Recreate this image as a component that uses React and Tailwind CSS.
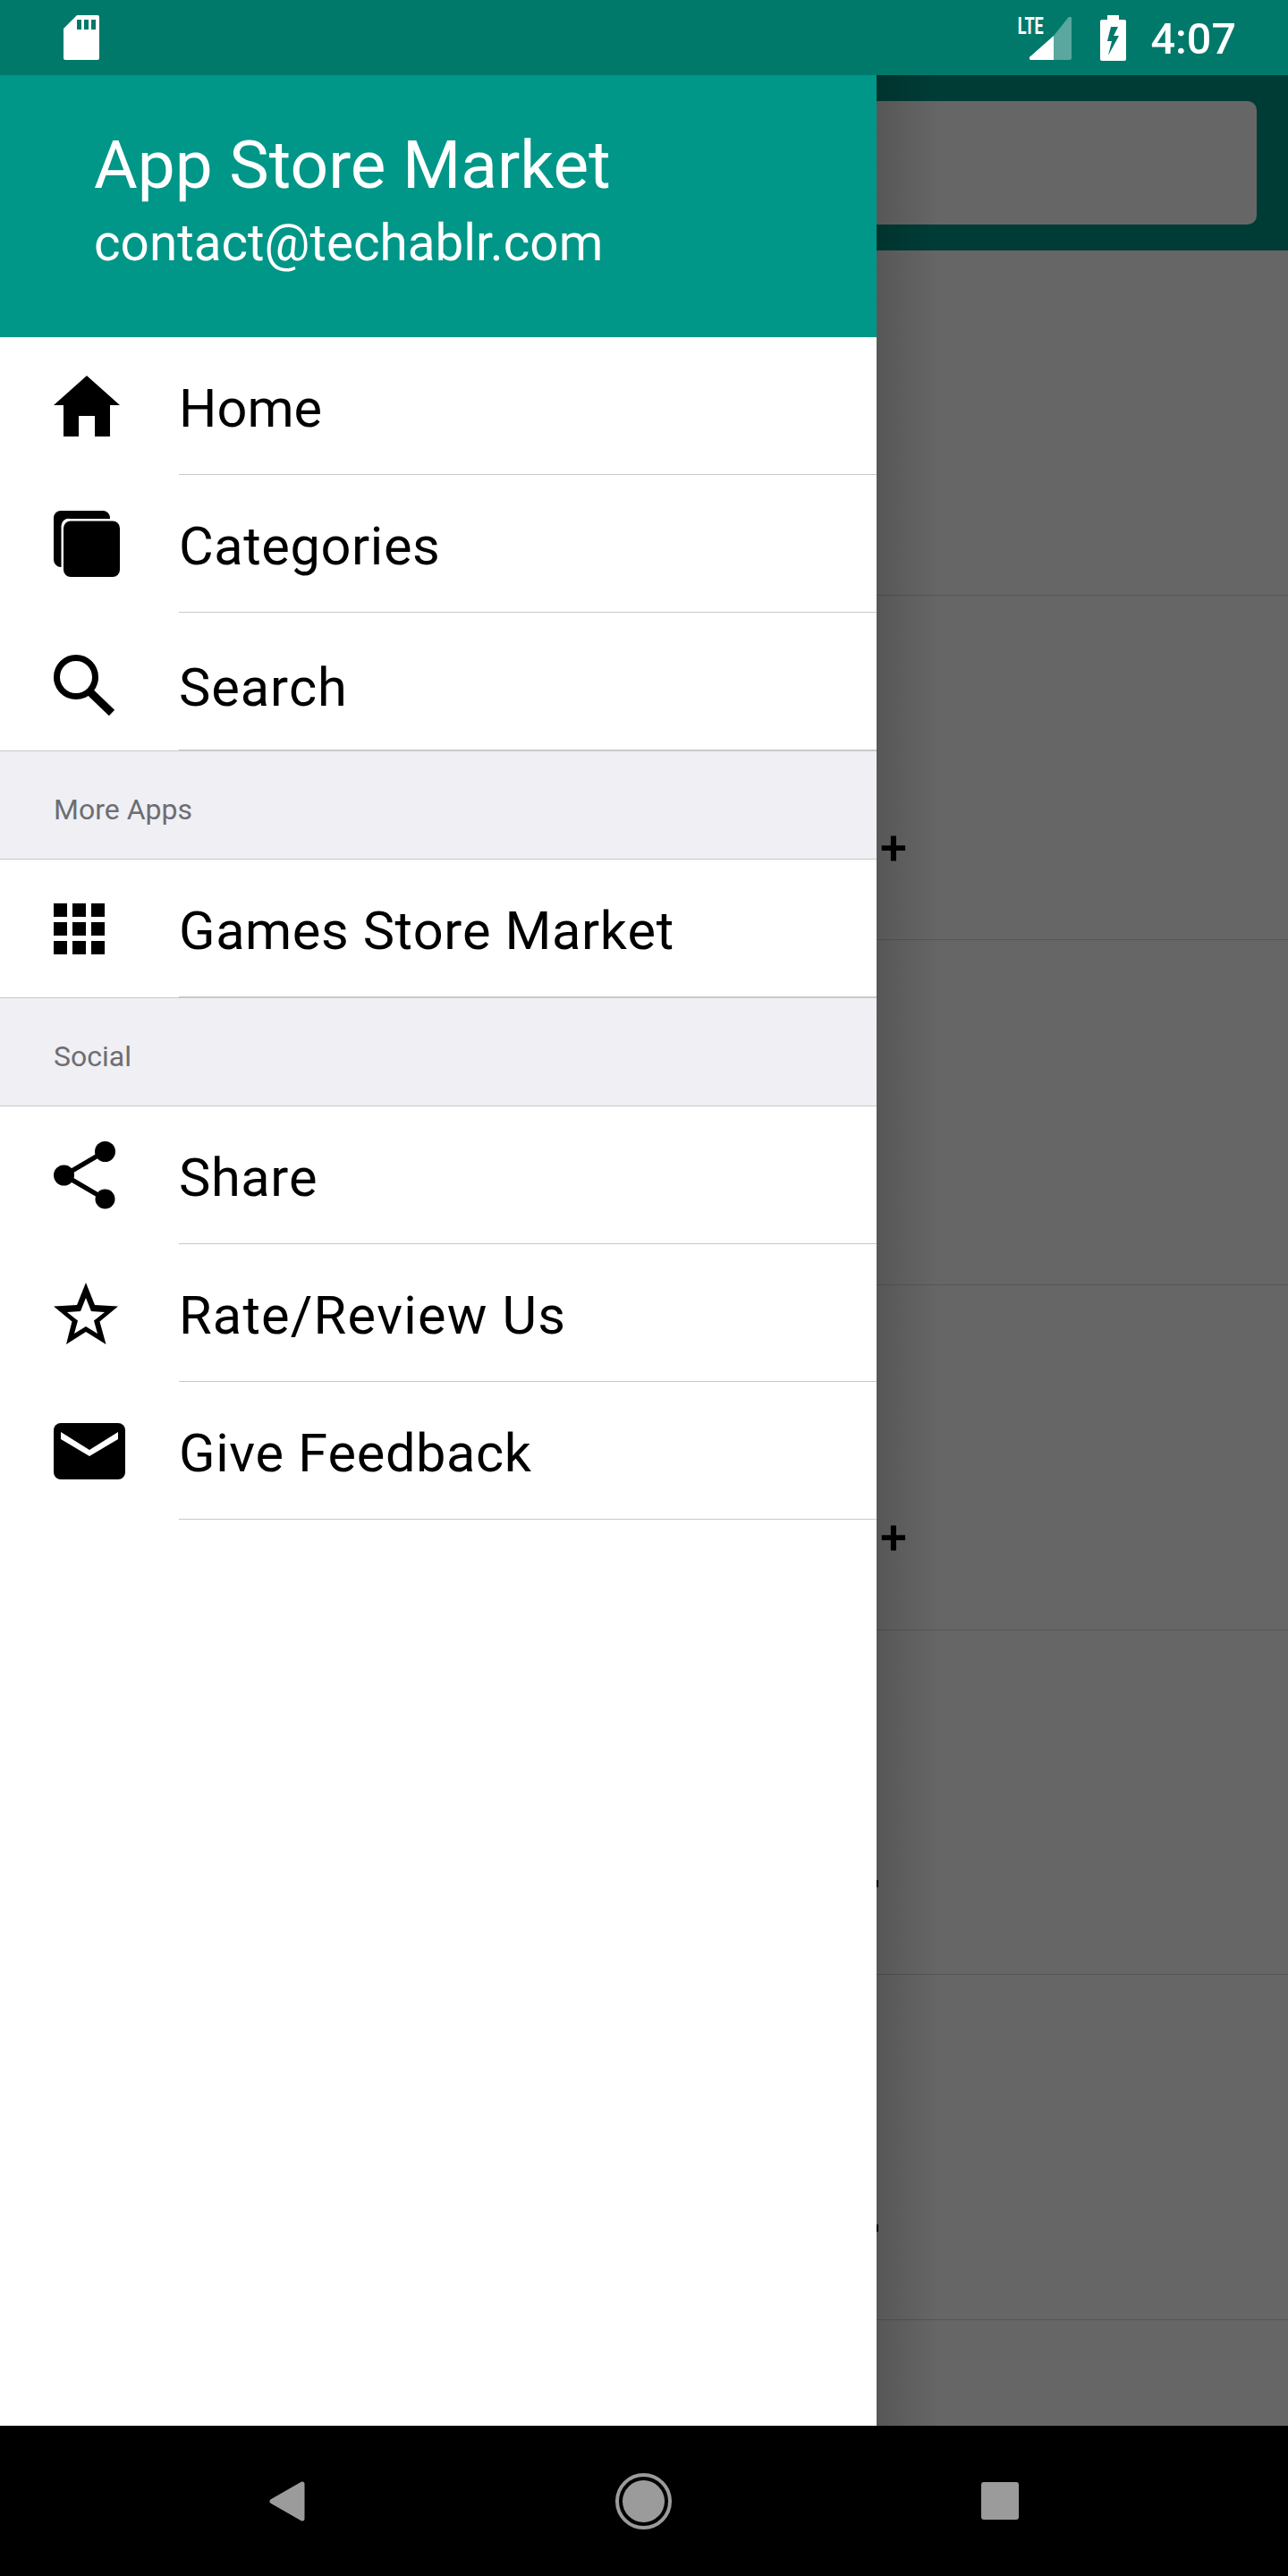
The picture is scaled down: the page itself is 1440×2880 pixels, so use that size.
const roboto = "font-['Roboto',sans-serif]";

function HomeIcon() {
  return (
    <svg width="74" height="68" viewBox="0 0 74 68" className="block">
      <path d="M37 0 L74 33 H63 V68 H46 V45 H28 V68 H11 V33 H0 Z" fill="#000" />
    </svg>
  );
}

function CategoriesIcon() {
  return (
    <svg width="74" height="74" viewBox="0 0 74 74" className="block">
      <path d="M8 0 H55 A8 8 0 0 1 63 8 L63 9 H18 A8 8 0 0 0 8.500 17 V63 A8 8 0 0 1 0 55 V8 A8 8 0 0 1 8 0 Z" fill="#000" />
      <rect x="11" y="11.500" width="63" height="62.500" rx="8" fill="#000" />
    </svg>
  );
}

function SearchIcon() {
  return (
    <svg width="69" height="68" viewBox="0 0 69 68" className="block">
      <circle cx="25" cy="25" r="21.500" fill="none" stroke="#000" strokeWidth="7" />
      <path d="M40 41 L65 65" fill="none" stroke="#000" strokeWidth="9" />
    </svg>
  );
}

function GridIcon() {
  return (
    <div className="grid w-[57px] grid-cols-[15px_15px_15px] gap-[6px]">
      {[0, 1, 2, 3, 4, 5, 6, 7, 8].map((n) => (
        <div key={n} className="h-[15px] bg-black" />
      ))}
    </div>
  );
}

function ShareIcon() {
  return (
    <svg width="69" height="76" viewBox="0 0 69 76" className="block">
      <path d="M57 11.500 L12 38 L58 65" fill="none" stroke="#000" strokeWidth="5.500" />
      <circle cx="57.500" cy="11.500" r="11.500" fill="#000" />
      <circle cx="11.500" cy="38" r="11.500" fill="#000" />
      <circle cx="57.500" cy="64.500" r="11" fill="#000" />
    </svg>
  );
}

function StarIcon() {
  return (
    <svg width="72" height="69" viewBox="0 0 72 69" className="block">
      <path
        fillRule="evenodd"
        d="M36 0 L46 25 L72 26.500 L51.500 43.500 L58.500 69 L36 55 L14 69 L20.500 43.500 L0 26.500 L26 25 Z M36 17 L30 32 L15 33 L27 42.500 L23 57 L36 49 L49 57 L45 42.500 L57 33 L42 32 Z"
        fill="#000"
      />
    </svg>
  );
}

function MailIcon() {
  return (
    <svg width="80" height="63" viewBox="0 0 80 63" className="block">
      <rect width="80" height="63" rx="8" fill="#000" />
      <path d="M8 10 L40 30 L72 10 V18 L40 37 L8 18 Z" fill="#fff" />
    </svg>
  );
}

function SdCardIcon() {
  return (
    <svg width="40" height="50" viewBox="0 0 40 50" className="block">
      <path
        fillRule="evenodd"
        d="M15 0 H38 A2 2 0 0 1 40 2 V48 A2 2 0 0 1 38 50 H2 A2 2 0 0 1 0 48 V15 Z M15 5 V16 H20 V5 Z M23 5 V16 H28 V5 Z M31 5 V16 H36 V5 Z"
        fill="#fff"
      />
    </svg>
  );
}

function SignalIcon() {
  return (
    <svg width="47" height="48" viewBox="0 0 47 48" className="block">
      <path d="M47 2 V46 A2 2 0 0 1 45 48 H27 V21 L43 1 A2 2 0 0 1 47 2 Z" fill="#fff" fillOpacity="0.35" />
      <path d="M27 21 V48 H3 A2 2 0 0 1 1 44 Z" fill="#fff" />
    </svg>
  );
}

function BatteryIcon() {
  return (
    <svg width="29" height="51" viewBox="0 0 29 51" className="block">
      <path
        fillRule="evenodd"
        d="M8 0 H21 V5 H27 A2 2 0 0 1 29 7 V49 A2 2 0 0 1 27 51 H2 A2 2 0 0 1 0 49 V7 A2 2 0 0 1 2 5 H8 Z M12 13 L8 29 H13 L9 45 L21 23 H15 L20 13 Z"
        fill="#fff"
      />
    </svg>
  );
}

function MenuRow({ icon, label, iconClass = "", textClass = "pt-[8px] tracking-[0.6px]" }) {
  return (
    <div className="flex h-[154px] shrink-0">
      <div className="flex w-[200px] shrink-0 items-center pl-[60px]">
        <div className={iconClass}>{icon}</div>
      </div>
      <div className="flex min-w-0 flex-1 items-center border-b border-[#c8c7cc]">
        <span className={`text-[59.500px] leading-none text-black [font-kerning:none] ${textClass}`}>{label}</span>
      </div>
    </div>
  );
}

function SectionHeader({ label }) {
  return (
    <div className="flex h-[122px] shrink-0 items-center border-y border-[#c8c7cc] bg-[#efeff4] pl-[60px]">
      <span className="pt-[9px] text-[32px] leading-none text-[#6d6d72]">{label}</span>
    </div>
  );
}

function BackgroundRow({ plus, sliver }) {
  return (
    <div className="relative h-[385.700px] shrink-0 border-b border-[#565656]">
      {plus && (
        <span className="absolute left-[4px] top-[255px] text-[54px] font-medium leading-none text-black">+</span>
      )}
      {sliver && <div className="absolute left-0 top-[279px] h-[8px] w-[2px] bg-black" />}
    </div>
  );
}

export default function App() {
  return (
    <div className={`flex h-[2880px] w-[1440px] flex-col overflow-hidden bg-black ${roboto}`}>
      {/* status bar */}
      <div className="flex h-[84px] shrink-0 items-center justify-between bg-[#00796b] pl-[71px] pr-[58px]">
        <SdCardIcon />
        <div className="flex items-center">
          <span className="mb-[25px] mr-[-22px] scale-x-[0.72] text-[25px] font-bold leading-none text-white">LTE</span>
          <div className="mt-[2px]"><SignalIcon /></div>
          <div className="ml-[32px]"><BatteryIcon /></div>
          <span className="ml-[28px] mt-[4px] text-[48.500px] font-medium leading-none text-white">4:07</span>
        </div>
      </div>

      <div className="flex min-h-0 flex-1">
        {/* drawer */}
        <div className="flex w-[980px] shrink-0 flex-col bg-white">
          <div className="flex h-[293px] shrink-0 flex-col bg-[#009688] pl-[105px] pt-[45px]">
            <span className="text-[74.800px] leading-[112px] text-white">App Store Market</span>
            <span className="text-[56.600px] leading-[62px] text-white">contact@techablr.com</span>
          </div>
          <MenuRow icon={<HomeIcon />} label="Home" textClass="pt-[8px]" />
          <MenuRow icon={<CategoriesIcon />} label="Categories" />
          <MenuRow icon={<SearchIcon />} label="Search" iconClass="mt-[8px]" textClass="pt-[16px] tracking-[0.9px]" />
          <SectionHeader label="More Apps" />
          <MenuRow icon={<GridIcon />} label="Games Store Market" />
          <SectionHeader label="Social" />
          <MenuRow icon={<ShareIcon />} label="Share" />
          <MenuRow icon={<StarIcon />} label="Rate/Review Us" textClass="pt-[8px] tracking-[1.2px]" />
          <MenuRow icon={<MailIcon />} label="Give Feedback" />
        </div>

        {/* dimmed content behind the drawer */}
        <div className="relative flex min-w-0 flex-1 flex-col overflow-hidden bg-[#666666]">
          <div className="flex h-[196px] shrink-0 items-center bg-[#003c36] pr-[35px]">
            <div className="h-[138px] w-full rounded-r-[10px] bg-[#666666]" />
          </div>
          <BackgroundRow />
          <BackgroundRow plus />
          <BackgroundRow />
          <BackgroundRow plus />
          <BackgroundRow sliver />
          <BackgroundRow sliver />
          {/* drawer shadow */}
          <div className="absolute inset-y-0 left-0 w-[70px] bg-gradient-to-r from-black/15 to-transparent" />
        </div>
      </div>

      {/* nav bar */}
      <div className="flex h-[168px] shrink-0 items-center justify-between bg-black px-[301px]">
        <svg width="40" height="45" viewBox="0 0 40 45" className="block">
          <path d="M37 3 V42 L3 22.500 Z" fill="#9b9b9b" stroke="#9b9b9b" strokeWidth="5" strokeLinejoin="round" />
        </svg>
        <div className="flex h-[63px] w-[63px] items-center justify-center rounded-full border-[4px] border-[#9b9b9b]">
          <div className="h-[47px] w-[47px] rounded-full bg-[#9b9b9b]" />
        </div>
        <div className="h-[42px] w-[42px] rounded-[3px] bg-[#9b9b9b]" />
      </div>
    </div>
  );
}
